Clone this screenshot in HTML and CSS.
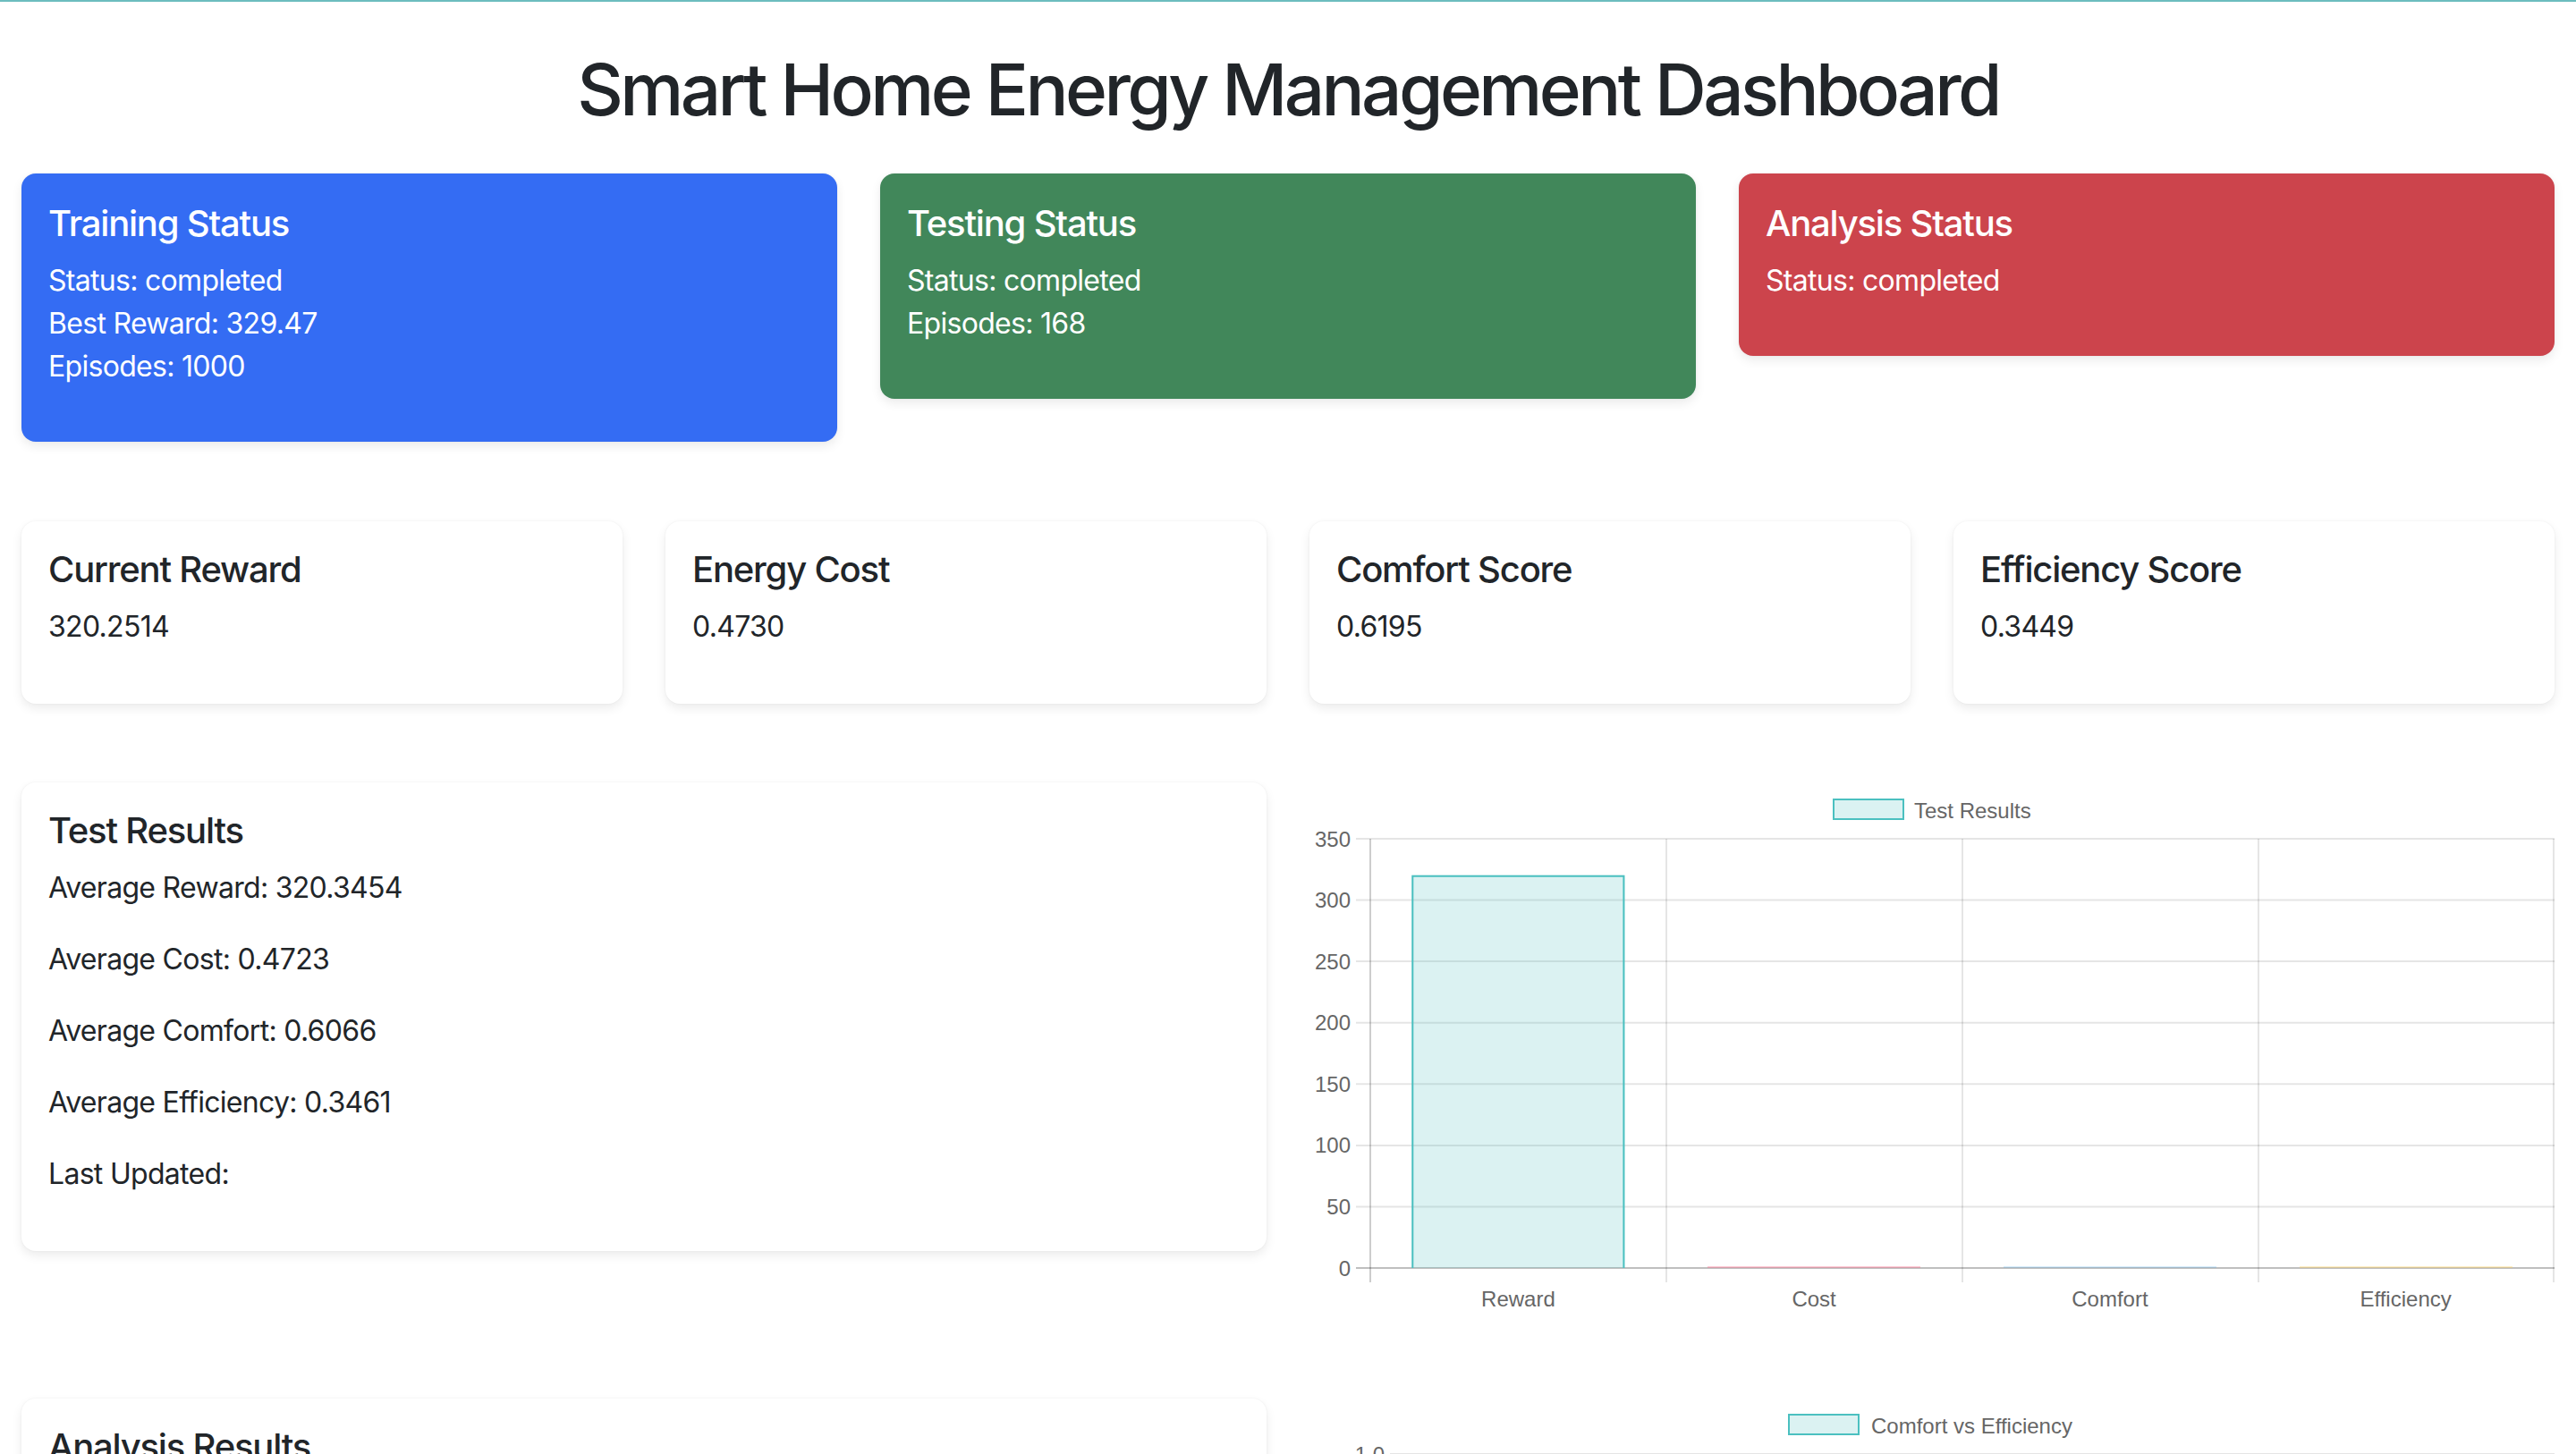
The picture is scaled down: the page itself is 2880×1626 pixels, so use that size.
FILE: index.html
```html
<!DOCTYPE html>
<html lang="en">
<head>
<meta charset="utf-8">
<title>Smart Home Energy Management Dashboard</title>
<link rel="stylesheet" href="styles.css">
</head>
<body>
<main class="container">
  <h1 class="page-title">Smart Home Energy Management Dashboard</h1>

  <section class="status-row">
    <div class="card card-status card-blue">
      <h5 class="card-title">Training Status</h5>
      <div class="status-lines">
        <p>Status: completed</p>
        <p>Best Reward: 329.47</p>
        <p>Episodes: 1000</p>
      </div>
    </div>
    <div class="card card-status card-green">
      <h5 class="card-title">Testing Status</h5>
      <div class="status-lines">
        <p>Status: completed</p>
        <p>Episodes: 168</p>
      </div>
    </div>
    <div class="card card-status card-red">
      <h5 class="card-title">Analysis Status</h5>
      <div class="status-lines">
        <p>Status: completed</p>
      </div>
    </div>
  </section>

  <section class="metric-row">
    <div class="card">
      <h5 class="card-title">Current Reward</h5>
      <p>320.2514</p>
    </div>
    <div class="card">
      <h5 class="card-title">Energy Cost</h5>
      <p>0.4730</p>
    </div>
    <div class="card">
      <h5 class="card-title">Comfort Score</h5>
      <p>0.6195</p>
    </div>
    <div class="card">
      <h5 class="card-title">Efficiency Score</h5>
      <p>0.3449</p>
    </div>
  </section>

  <section class="result-row">
    <div class="card">
      <h5 class="card-title">Test Results</h5>
      <p>Average Reward: 320.3454</p>
      <p>Average Cost: 0.4723</p>
      <p>Average Comfort: 0.6066</p>
      <p>Average Efficiency: 0.3461</p>
      <p>Last Updated: </p>
    </div>
    <div class="chart-box">
      <svg class="chart" width="1392" height="600" viewBox="0 0 1392 600">
        <rect x="586" y="19" width="78" height="22" fill="rgba(75,192,192,0.2)" stroke="rgb(75,192,192)" stroke-width="2"/>
        <text class="lbl" x="676" y="39.5">Test Results</text>

        <g stroke="rgba(0,0,0,0.1)" stroke-width="2">
          <line x1="52" y1="63" x2="1392" y2="63"/>
          <line x1="52" y1="131.6" x2="1392" y2="131.6"/>
          <line x1="52" y1="200.1" x2="1392" y2="200.1"/>
          <line x1="52" y1="268.7" x2="1392" y2="268.7"/>
          <line x1="52" y1="337.3" x2="1392" y2="337.3"/>
          <line x1="52" y1="405.9" x2="1392" y2="405.9"/>
          <line x1="52" y1="474.4" x2="1392" y2="474.4"/>
          <line x1="68" y1="63" x2="68" y2="559"/>
          <line x1="68" y1="63" x2="68" y2="559"/>
          <line x1="399" y1="63" x2="399" y2="559"/>
          <line x1="730" y1="63" x2="730" y2="559"/>
          <line x1="1061" y1="63" x2="1061" y2="559"/>
          <line x1="1391" y1="63" x2="1391" y2="559"/>
        </g>
        <line x1="52" y1="543" x2="1392" y2="543" stroke="rgba(0,0,0,0.25)" stroke-width="2"/>

        <g class="lbl" text-anchor="end">
          <text x="46" y="71.5">350</text>
          <text x="46" y="140">300</text>
          <text x="46" y="208.6">250</text>
          <text x="46" y="277.2">200</text>
          <text x="46" y="345.8">150</text>
          <text x="46" y="414.4">100</text>
          <text x="46" y="482.9">50</text>
          <text x="46" y="551.5">0</text>
        </g>

        <rect x="114.3" y="103.7" width="238.1" height="439.3" fill="rgba(75,192,192,0.2)"/>
        <path d="M115.3 543 V104.7 H351.4 V543" fill="none" stroke="rgb(75,192,192)" stroke-width="2"/>
        <line x1="445" y1="542" x2="683" y2="542" stroke="rgba(255,99,132,0.35)" stroke-width="2"/>
        <line x1="776" y1="542" x2="1014" y2="542" stroke="rgba(54,162,235,0.2)" stroke-width="2"/>
        <line x1="1107" y1="542" x2="1345" y2="542" stroke="rgba(255,206,86,0.35)" stroke-width="2"/>

        <g class="lbl" text-anchor="middle">
          <text x="233.4" y="586">Reward</text>
          <text x="564.1" y="586">Cost</text>
          <text x="894.9" y="586">Comfort</text>
          <text x="1225.6" y="586">Efficiency</text>
        </g>
      </svg>
    </div>
  </section>

  <section class="result-row">
    <div class="card">
      <h5 class="card-title">Analysis Results</h5>
      <p>Comfort vs Efficiency analysis</p>
    </div>
    <div class="chart-box">
      <svg class="chart" width="1392" height="600" viewBox="0 0 1392 600">
        <rect x="536" y="18" width="78" height="22" fill="rgba(75,192,192,0.2)" stroke="rgb(75,192,192)" stroke-width="2"/>
        <text class="lbl" x="628" y="38.5">Comfort vs Efficiency</text>
        <g stroke="rgba(0,0,0,0.1)" stroke-width="2">
          <line x1="90" y1="62" x2="1392" y2="62"/>
          <line x1="90" y1="110" x2="1392" y2="110"/>
          <line x1="90" y1="158" x2="1392" y2="158"/>
          <line x1="106" y1="62" x2="106" y2="559"/>
        </g>
        <g class="lbl" text-anchor="end">
          <text x="84" y="70.5">1.0</text>
          <text x="84" y="118.5">0.9</text>
          <text x="84" y="166.5">0.8</text>
        </g>
      </svg>
    </div>
  </section>
</main>
</body>
</html>
```

FILE: styles.css
```css
html, body {
  margin: 0;
  padding: 0;
}

body {
  border-top: 2px solid #6cbdbf;
  background: #ffffff;
  color: #212529;
  font-family: Inter, "Noto Sans", "Liberation Sans", sans-serif;
  font-size: 32px;
  line-height: 1.5;
  letter-spacing: -0.7px;
}

.container {
  padding: 0 24px;
}

.page-title {
  margin: 50px 0 46px;
  font-size: 80px;
  font-weight: 500;
  line-height: 1.2;
  text-align: center;
  letter-spacing: -3.6px;
}

.card {
  background: #ffffff;
  border-radius: 16px;
  padding: 30px;
  box-shadow: 0 5px 12px rgba(0, 0, 0, 0.08), 0 0 3px rgba(0, 0, 0, 0.05);
}

.card-status {
  padding-top: 32px;
}

.card-title {
  margin: 0 0 16px;
  font-size: 40px;
  font-weight: 500;
  line-height: 1.2;
  letter-spacing: -1.2px;
}

.card p {
  margin: 0 0 32px;
}

.status-lines {
  margin-bottom: 30px;
}

.status-lines p {
  margin: 0;
}

.card-blue {
  background: #346cf3;
  color: #ffffff;
}

.card-green {
  background: #41875a;
  color: #ffffff;
}

.card-red {
  background: #cc444c;
  color: #ffffff;
}

.status-row {
  display: grid;
  grid-template-columns: repeat(3, 1fr);
  gap: 48px;
  align-items: start;
  margin-bottom: 89px;
}

.metric-row {
  display: grid;
  grid-template-columns: repeat(4, 1fr);
  gap: 48px;
  align-items: start;
  margin-bottom: 88px;
}

.result-row {
  display: grid;
  grid-template-columns: repeat(2, 1fr);
  gap: 48px;
  align-items: start;
  margin-bottom: 89px;
}

.chart-box {
  height: 600px;
}

.chart {
  display: block;
}

.lbl {
  font-family: "Liberation Sans", Arial, sans-serif;
  font-size: 24px;
  fill: #666666;
  letter-spacing: 0;
}
```
